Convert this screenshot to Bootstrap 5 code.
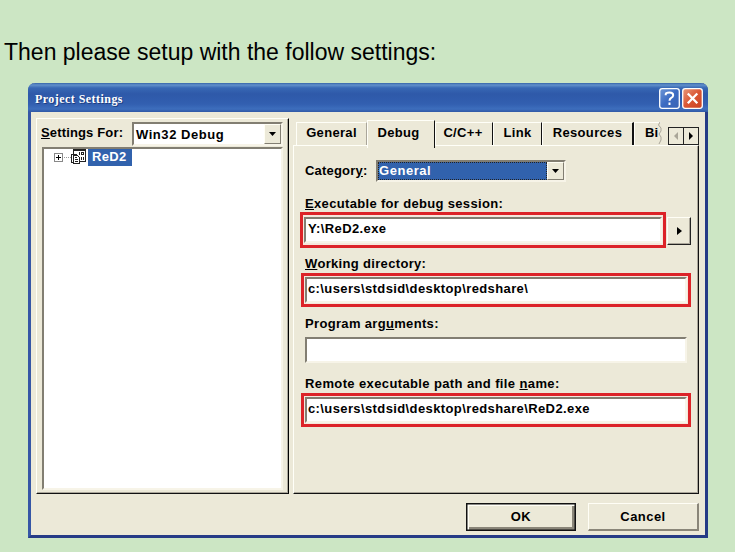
<!DOCTYPE html>
<html lang="en">
<head>
<meta charset="utf-8">
<meta name="viewport" content="width=device-width, initial-scale=1">
<title>Project Settings</title>
<link href="https://cdn.jsdelivr.net/npm/bootstrap@5.3.0/dist/css/bootstrap.min.css" rel="stylesheet">
<style>
:root{--face:#ece9d8;--shade:#827e72;--sel:#3162ad;--mark:#dc2328}
body{background:#cce6c4;color:#000;font-family:"Liberation Sans",Arial,sans-serif;width:735px;height:552px;overflow:hidden}
.intro{font-size:23px;line-height:28px;padding:38px 0 0 4px;height:83px;white-space:nowrap}
.dlg{width:680px;height:455px;margin-left:28px;background:var(--face);border:3px solid #263b86;border-top:0;border-left-color:#3556a5;border-radius:7px 7px 0 0;font:bold 13px/16px "Liberation Sans",Arial,sans-serif;letter-spacing:.33px;white-space:nowrap}
.titlebar{height:29px;margin:0 -3px;padding:3px 5px 0 6px;background:linear-gradient(#3564a8 0,#6190cb 2px,#3767b4 5px,#2e59a9 11px,#325fb0 21px,#3d6ebd 26px,#3158a5 29px);border-radius:7px 7px 0 0;color:#fff}
.titletext{font:bold 12px/18px "Liberation Serif","Times New Roman",serif;letter-spacing:.45px;padding-left:1px;text-shadow:1px 1px 0 #1d3d80}
.titlebar svg{display:block}
.panes{height:376px;margin-top:6px;padding-left:5px}
.leftpane{width:253px;border:1px solid #fffff8;border-right:1px solid #000;border-bottom:1px solid #111;box-shadow:inset -1px -1px #aaa69a;padding:3px 5px 4px 5px}
.settingsfor{width:91px;letter-spacing:.15px;margin-left:-1px;padding-top:3px}
.sunk{background:#fff;border:2px solid var(--shade);border-right-color:#f7f4e8;border-bottom-color:#f7f4e8}
.raised{background:var(--face);border:1px solid #fffef4;border-right-color:var(--shade);border-bottom-color:var(--shade)}
.combo{height:24px}
.combo .raised{width:17px}
.combotext{padding:3px 0 0 2px;letter-spacing:.55px}
.lefttree{height:343px;margin-top:1px}
.treerow{height:17px;margin:0 0 0 10px}
.seltext{background:var(--sel);color:#fff;height:17px;padding:0 4px;margin-left:2px;width:44px}
.rightpane{width:406px;margin-left:4px}
.tabstrip{height:27px;padding-left:3px}
.tabx{height:23px;margin-top:4px;border-top:1px solid #fffff8;border-left:1px solid #fffff8;border-right:1px solid #111;padding-top:2px;text-align:center}
.tabx.before{border-right-color:#aaa69a}
.tabx.on{height:28px;margin-top:2px;padding:4px 5px 0 0;background:var(--face);position:relative}
.tabx.cut{width:27px;padding-left:10px;border-right:0;text-align:left;letter-spacing:0}
.tear{margin-left:-4px;margin-top:4px}
.pagebody{height:349px;border:1px solid #fffff8;border-right:1px solid #111;border-bottom:1px solid #111;box-shadow:inset -1px -1px #aaa69a;padding:14px 6px 0 7px}
.scrollers{width:31px;height:18px;margin:9px 0 0 auto;border:1px solid #222}
.scrollers svg{display:block}
.cat{height:22px}
.cat .name{width:75px;letter-spacing:.2px;padding-top:3px}
.picked{background:var(--sel);color:#fff;padding:1px 1px 0;outline:1px dotted #222;outline-offset:-1px;letter-spacing:.55px}
.lbl{height:16px;padding-left:4px;margin-top:14px}
.lbl u{text-underline-offset:1px}
.field{height:26px;padding:0 1px;line-height:19px;letter-spacing:.39px}
.red{border:3px solid var(--mark);background:#f5e7dc;padding:2px 1px}
.red.wide{width:390px;height:34px;padding:1px}
.blank{margin:5px 0 0 4px;width:382px}
.browse{width:24px;height:28px;margin:5px 0 0 1px;border:1px solid #fffef6;border-right-color:#222;border-bottom-color:#222;box-shadow:inset -1px -1px #aaa69a}
.actions{padding:9px 6px 0 0;gap:12px}
.actbtn{height:28px;text-align:center;padding-top:5px;letter-spacing:.45px}
.actbtn.dft{width:110px;border:1px solid #111;box-shadow:inset 0 0 0 .5px #111,inset 2px 2px #fffef6,inset -3px -3px #8a8679}
.actbtn.cancel{width:111px;border:1px solid #fffef6;border-right:2px solid #8a8679;border-bottom:2px solid #8a8679}
</style>
<script src="https://cdn.jsdelivr.net/npm/bootstrap@5.3.0/dist/js/bootstrap.bundle.min.js"></script>
</head>
<body>
<div class="intro">Then please setup with the follow settings:</div>
<main class="dlg">
  <header class="titlebar d-flex">
    <div class="titletext me-auto pt-1">Project Settings</div>
    <svg width="46" height="24" viewBox="0 0 46 24">
      <defs><linearGradient id="gb" x1="0" y1="0" x2="1" y2="1"><stop offset="0" stop-color="#6e97d6"/><stop offset=".5" stop-color="#3c6bc2"/><stop offset="1" stop-color="#3a64b4"/></linearGradient>
      <linearGradient id="gr" x1="0" y1="0" x2="1" y2="1"><stop offset="0" stop-color="#e79a7c"/><stop offset=".5" stop-color="#da5634"/><stop offset="1" stop-color="#c94223"/></linearGradient></defs>
      <rect x="2.700" y="2.700" width="19.600" height="19.600" rx="2.500" fill="url(#gb)" stroke="#fff" stroke-width="1.300"/>
      <path d="M8.700 9.200V8.400q0-1.800 3.800-1.800 3.700 0 3.700 2.600 0 1.500-2 2.600-1.700 1-1.700 3M12.500 16.600v2.300" fill="none" stroke="#fff" stroke-width="2"/>
      <rect x="25.700" y="2.700" width="19.600" height="19.600" rx="2.500" fill="url(#gr)" stroke="#fff" stroke-width="1.300"/>
      <path d="M30.800 7.500l9.500 9.800M40.300 7.500l-9.500 9.800" stroke="#fff" stroke-width="2.300"/>
    </svg>
  </header>
  <div class="panes d-flex">
    <section class="leftpane">
      <div class="d-flex">
        <div class="settingsfor"><u>S</u>ettings For:</div>
        <div class="combo sunk d-flex flex-grow-1">
          <div class="combotext flex-grow-1">Win32 Debug</div>
          <div class="raised d-flex align-items-center justify-content-center"><svg width="7" height="4"><path d="M0 0h7L3.500 4z"/></svg></div>
        </div>
      </div>
      <div class="lefttree sunk">
        <div class="treerow d-flex">
          <svg width="32" height="17" viewBox="0 0 32 17" shape-rendering="crispEdges">
            <path d="M.5 4.500h8v8h-8z" fill="#fff" stroke="#888"/><path d="M2 8.500h5M4.500 6v5" stroke="#000"/><path d="M10 8.500h7" stroke="#999" stroke-dasharray="1 1"/>
            <path d="M19.500 .500h12v12h-12z" fill="#fff" stroke="#222"/><path d="M19 1.500h13" stroke="#222"/>
            <path d="M25.500 3v3M27.500 3.500h2v2h-2zM27.500 8v3M29.500 8v3" fill="none" stroke="#222"/>
            <path d="M17.500 5.500h5v8h-5z" fill="#fff" stroke="#222"/><path d="M19.500 6.500h4l2 2v6h-6z" fill="#fff" stroke="#222"/><path d="M21 8.500h2M21 10.500h3M21 12.500h3" stroke="#222"/>
          </svg>
          <div class="seltext">ReD2</div>
        </div>
      </div>
    </section>
    <section class="rightpane">
      <div class="tabstrip d-flex">
        <div class="tabx before" style="width:71px">General</div>
        <div class="tabx on" style="width:68px">Debug</div>
        <div class="tabx" style="width:58px;padding-right:2px">C/C++</div>
        <div class="tabx" style="width:49px">Link</div>
        <div class="tabx" style="width:92px;border-right-width:2px">Resources</div>
        <div class="tabx cut">Bi</div>
        <svg class="tear" width="6" height="23"><path d="M3 0L1.500 3 4 6v3L2 12l2 3v3L2 22" fill="none" stroke="#aaa69a"/></svg>
        <div class="scrollers"><svg width="29" height="16"><path d="M14.500 0v16" stroke="#222"/><path d="M9 4v8L5 8z" fill="#aaa698"/><path d="M20 4v8l4-4z"/></svg></div>
      </div>
      <div class="pagebody">
        <div class="cat d-flex">
          <div class="name ps-1">Categor<u>y</u>:</div>
          <div class="sunk d-flex" style="width:190px">
            <div class="picked flex-grow-1">General</div>
            <div class="raised d-flex align-items-center justify-content-center" style="width:17px"><svg width="7" height="4"><path d="M0 0h7L3.500 4z"/></svg></div>
          </div>
        </div>
        <div class="lbl"><u>E</u>xecutable for debug session:</div>
        <div class="d-flex">
          <div class="red" style="width:366px;height:36px;margin-left:-1px"><div class="sunk field ps-1" style="padding-left:2px!important">Y:\ReD2.exe</div></div>
          <div class="browse d-flex align-items-center justify-content-center"><svg width="5" height="8"><path d="M0 0v8l5-4z"/></svg></div>
        </div>
        <div class="lbl" style="margin-top:8px"><u>W</u>orking directory:</div>
        <div class="red wide" style="margin-top:1px"><div class="sunk field">c:\users\stdsid\desktop\redshare\</div></div>
        <div class="lbl" style="margin-top:9px">Program arg<u>u</u>ments:</div>
        <div class="sunk field blank"></div>
        <div class="lbl" style="margin-top:13px;letter-spacing:.38px">Remote executable path and file <u>n</u>ame:</div>
        <div class="red wide" style="margin-top:1px"><div class="sunk field">c:\users\stdsid\desktop\redshare\ReD2.exe</div></div>
      </div>
    </section>
  </div>
  <footer class="actions d-flex justify-content-end">
    <div class="actbtn dft">OK</div>
    <div class="actbtn cancel">Cancel</div>
  </footer>
</main>
</body>
</html>
